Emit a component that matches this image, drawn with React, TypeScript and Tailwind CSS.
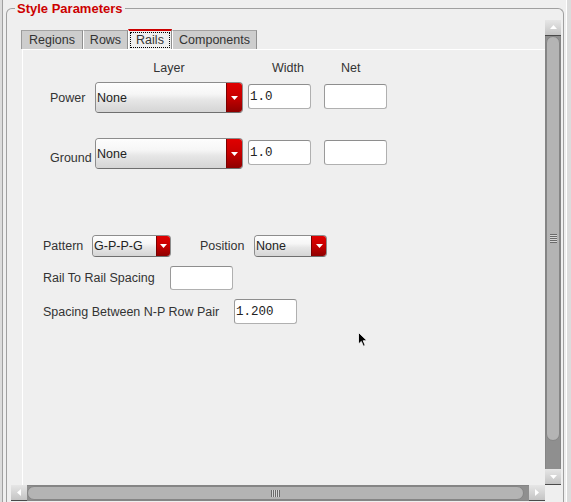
import React from "react";

function Dropdown({ label, cls, btn }: { label: string; cls: string; btn: string }) {
  return (
    <div className={`flex shrink-0 overflow-hidden rounded-[4px] border border-[#8c8c8c] border-b-[#6f6f6f] ${cls}`}>
      <div className="flex flex-1 items-center pl-[1px] text-[12.5px] leading-[14px] text-[#222] bg-[linear-gradient(to_bottom,#fdfdfd_0%,#f6f6f6_38%,#e6e6e6_58%,#d5d5d5_100%)]">
        {label}
      </div>
      <div className={`flex items-center justify-center border-l border-[#7a0000] bg-[linear-gradient(to_bottom,#e00000_0%,#c60000_50%,#8e0000_100%)] ${btn}`}>
        <svg width="7" height="4" viewBox="0 0 7 4">
          <path d="M0 0H7L3.5 4Z" fill="#ffffff" />
        </svg>
      </div>
    </div>
  );
}

function Field({ value, cls }: { value?: string; cls: string }) {
  return (
    <div
      className={`flex shrink-0 items-center rounded-[3px] border border-[#b0b0b0] border-t-[#8e8e8e] border-l-[#9a9a9a] bg-white pl-[1px] font-['Liberation_Mono','DejaVu_Sans_Mono',monospace] text-[12.5px] leading-[14px] text-[#222] ${cls}`}
    >
      {value}
    </div>
  );
}

function VScroll() {
  return (
    <div className="flex w-[16px] shrink-0 flex-col">
      <div className="flex h-[16px] shrink-0 items-start justify-center border-b border-[#4a4a4a] bg-[linear-gradient(to_bottom,#e6e6e6,#c4c4c4)] pt-[5px]">
        <svg width="7" height="4" viewBox="0 0 7 4">
          <path d="M3.5 0L7 4H0Z" fill="#ffffff" />
        </svg>
      </div>
      <div className="flex flex-1 flex-col border-x border-[#858585] bg-[#8f8f8f]">
        <div className="flex h-[405px] shrink-0 items-center justify-center rounded-[7px] border border-[#858585] bg-[#b4b4b4]">
          <svg width="7" height="9" viewBox="0 0 7 9">
            <rect x="0" y="0" width="7" height="1" fill="#6a6a6a" />
            <rect x="0" y="1" width="7" height="1" fill="#d6d6d6" />
            <rect x="0" y="2" width="7" height="1" fill="#6a6a6a" />
            <rect x="0" y="3" width="7" height="1" fill="#d6d6d6" />
            <rect x="0" y="4" width="7" height="1" fill="#6a6a6a" />
            <rect x="0" y="5" width="7" height="1" fill="#d6d6d6" />
            <rect x="0" y="6" width="7" height="1" fill="#6a6a6a" />
            <rect x="0" y="7" width="7" height="1" fill="#d6d6d6" />
            <rect x="0" y="8" width="7" height="1" fill="#6a6a6a" />
          </svg>
        </div>
      </div>
      <div className="flex h-[16px] shrink-0 items-center justify-center border-b border-[#4a4a4a] bg-[linear-gradient(to_bottom,#e6e6e6,#c4c4c4)]">
        <svg width="7" height="4" viewBox="0 0 7 4">
          <path d="M0 0H7L3.5 4Z" fill="#ffffff" />
        </svg>
      </div>
    </div>
  );
}

function HScroll() {
  return (
    <div className="flex flex-1">
      <div className="flex w-[16px] shrink-0 items-center justify-center border-b border-[#4a4a4a] bg-[linear-gradient(to_bottom,#e6e6e6,#c4c4c4)]">
        <svg width="4" height="7" viewBox="0 0 4 7">
          <path d="M0 3.5L4 0V7Z" fill="#ffffff" />
        </svg>
      </div>
      <div className="flex flex-1 border-y border-[#858585] bg-[#8f8f8f]">
        <div className="flex w-[497px] shrink-0 items-center justify-center rounded-[7px] border border-[#858585] bg-[#b4b4b4]">
          <svg width="9" height="7" viewBox="0 0 9 7">
            <rect x="0" y="0" width="1" height="7" fill="#6a6a6a" />
            <rect x="1" y="0" width="1" height="7" fill="#d6d6d6" />
            <rect x="2" y="0" width="1" height="7" fill="#6a6a6a" />
            <rect x="3" y="0" width="1" height="7" fill="#d6d6d6" />
            <rect x="4" y="0" width="1" height="7" fill="#6a6a6a" />
            <rect x="5" y="0" width="1" height="7" fill="#d6d6d6" />
            <rect x="6" y="0" width="1" height="7" fill="#6a6a6a" />
            <rect x="7" y="0" width="1" height="7" fill="#d6d6d6" />
            <rect x="8" y="0" width="1" height="7" fill="#6a6a6a" />
          </svg>
        </div>
      </div>
      <div className="flex w-[16px] shrink-0 items-center justify-center border-b border-[#4a4a4a] bg-[linear-gradient(to_bottom,#e6e6e6,#c4c4c4)]">
        <svg width="4" height="7" viewBox="0 0 4 7">
          <path d="M4 3.5L0 0V7Z" fill="#ffffff" />
        </svg>
      </div>
    </div>
  );
}

export default function App() {
  return (
    <div className="relative h-[502px] w-[571px] overflow-hidden bg-[#dcdcdc] pl-[2px] pr-[4px] font-['Liberation_Sans',Arial,sans-serif] text-[#333]">
      <div className="h-full border-l border-r border-l-[#a0a0a0] border-r-[#ffffff] bg-[#efefef] pl-[3px] pr-[2px] pt-[8px]">
        <div className="relative h-full rounded-tl-[6px] rounded-tr-[6px] border-l border-r border-t border-[#a0a0a0] pl-[4px] pr-[2px] pt-[11px]">
          <div className="absolute -top-[8px] left-[8px] bg-[#efefef] px-[2px] text-[13px] font-bold leading-[15px] text-[#cc0000]">
            Style Parameters
          </div>
          <div className="flex h-full flex-col pb-[1px]">
            <div className="flex min-h-0 flex-1">
              <div className="flex min-w-0 flex-1 flex-col overflow-hidden pl-[10px] pt-[9px]">
                {/* tabs */}
                <div className="flex h-[20px] shrink-0 items-end text-[12.5px] leading-[14px] text-[#333]">
                  <div className="flex h-[19px] w-[62px] items-center justify-center border-l border-r border-t border-l-[#9a9a9a] border-r-[#8f8f8f] border-t-[#a3a3a3] bg-[#cdcdcd]">
                    Regions
                  </div>
                  <div className="flex h-[19px] w-[45px] items-center justify-center border-l border-r border-t border-l-[#ffffff] border-r-[#8f8f8f] border-t-[#a3a3a3] bg-[#cdcdcd]">
                    Rows
                  </div>
                  <div className="flex h-[20px] w-[44px] border-l border-r border-t-2 border-l-[#ffffff] border-r-[#8f8f8f] border-t-[#cc0000] bg-[#efefef] px-[1px] py-[1px]">
                    <div className="flex flex-1 items-center justify-center border border-dotted border-black">
                      Rails
                    </div>
                  </div>
                  <div className="flex h-[19px] w-[85px] items-center justify-center border-l border-r border-t border-l-[#ffffff] border-r-[#8f8f8f] border-t-[#a3a3a3] bg-[#cdcdcd]">
                    Components
                  </div>
                </div>
                {/* panel */}
                <div className="ml-[1px] flex-1 border-l border-t border-white bg-[#efefef] pl-[20px] pt-[11px] text-[12.5px] leading-[14px] text-[#333]">
                  <div className="ml-[7px] flex h-[14px] items-center">
                    <div className="w-[45px] shrink-0" />
                    <div className="w-[148px] shrink-0 text-center">Layer</div>
                    <div className="ml-[5px] w-[63px] shrink-0 pl-[24px]">Width</div>
                    <div className="ml-[13px] w-[63px] shrink-0 pl-[17px]">Net</div>
                  </div>
                  <div className="ml-[7px] mt-[7px] flex h-[31px]">
                    <div className="w-[45px] shrink-0 self-center">Power</div>
                    <Dropdown label="None" cls="w-[148px] h-[31px]" btn="w-[16px]" />
                    <Field value="1.0" cls="ml-[5px] mt-[2px] w-[63px] h-[25px]" />
                    <Field cls="ml-[13px] mt-[2px] w-[63px] h-[25px]" />
                  </div>
                  <div className="ml-[7px] mt-[25px] flex h-[31px]">
                    <div className="mb-[4px] w-[45px] shrink-0 self-end">Ground</div>
                    <Dropdown label="None" cls="w-[148px] h-[31px]" btn="w-[16px]" />
                    <Field value="1.0" cls="ml-[5px] mt-[2px] w-[63px] h-[25px]" />
                    <Field cls="ml-[13px] mt-[2px] w-[63px] h-[25px]" />
                  </div>
                  <div className="mt-[66px] flex h-[22px] items-center">
                    <div className="w-[49px] shrink-0">Pattern</div>
                    <Dropdown label="G-P-P-G" cls="w-[79px] h-[22px]" btn="w-[14px]" />
                    <div className="ml-[29px] w-[54px] shrink-0">Position</div>
                    <Dropdown label="None" cls="w-[73px] h-[22px]" btn="w-[15px]" />
                  </div>
                  <div className="mt-[9px] flex h-[24px] items-center">
                    <div className="w-[127px] shrink-0">Rail To Rail Spacing</div>
                    <Field cls="w-[63px] h-[24px]" />
                  </div>
                  <div className="mt-[9px] flex h-[25px] items-center">
                    <div className="w-[191px] shrink-0">Spacing Between N-P Row Pair</div>
                    <Field value="1.200" cls="w-[63px] h-[25px]" />
                  </div>
                </div>
              </div>
              <VScroll />
            </div>
            <div className="flex h-[16px] shrink-0">
              <HScroll />
              <div className="w-[16px] shrink-0" />
            </div>
          </div>
        </div>
      </div>
      {/* mouse pointer over the page */}
      <svg className="absolute left-[358px] top-[332px]" width="10" height="16" viewBox="0 0 10 16">
        <path d="M0.5 0.5V12L3.3 9.4L5.4 14.2L7.2 13.4L5.2 8.7H9Z" fill="#000000" stroke="#ffffff" strokeWidth="0.8" />
      </svg>
    </div>
  );
}
